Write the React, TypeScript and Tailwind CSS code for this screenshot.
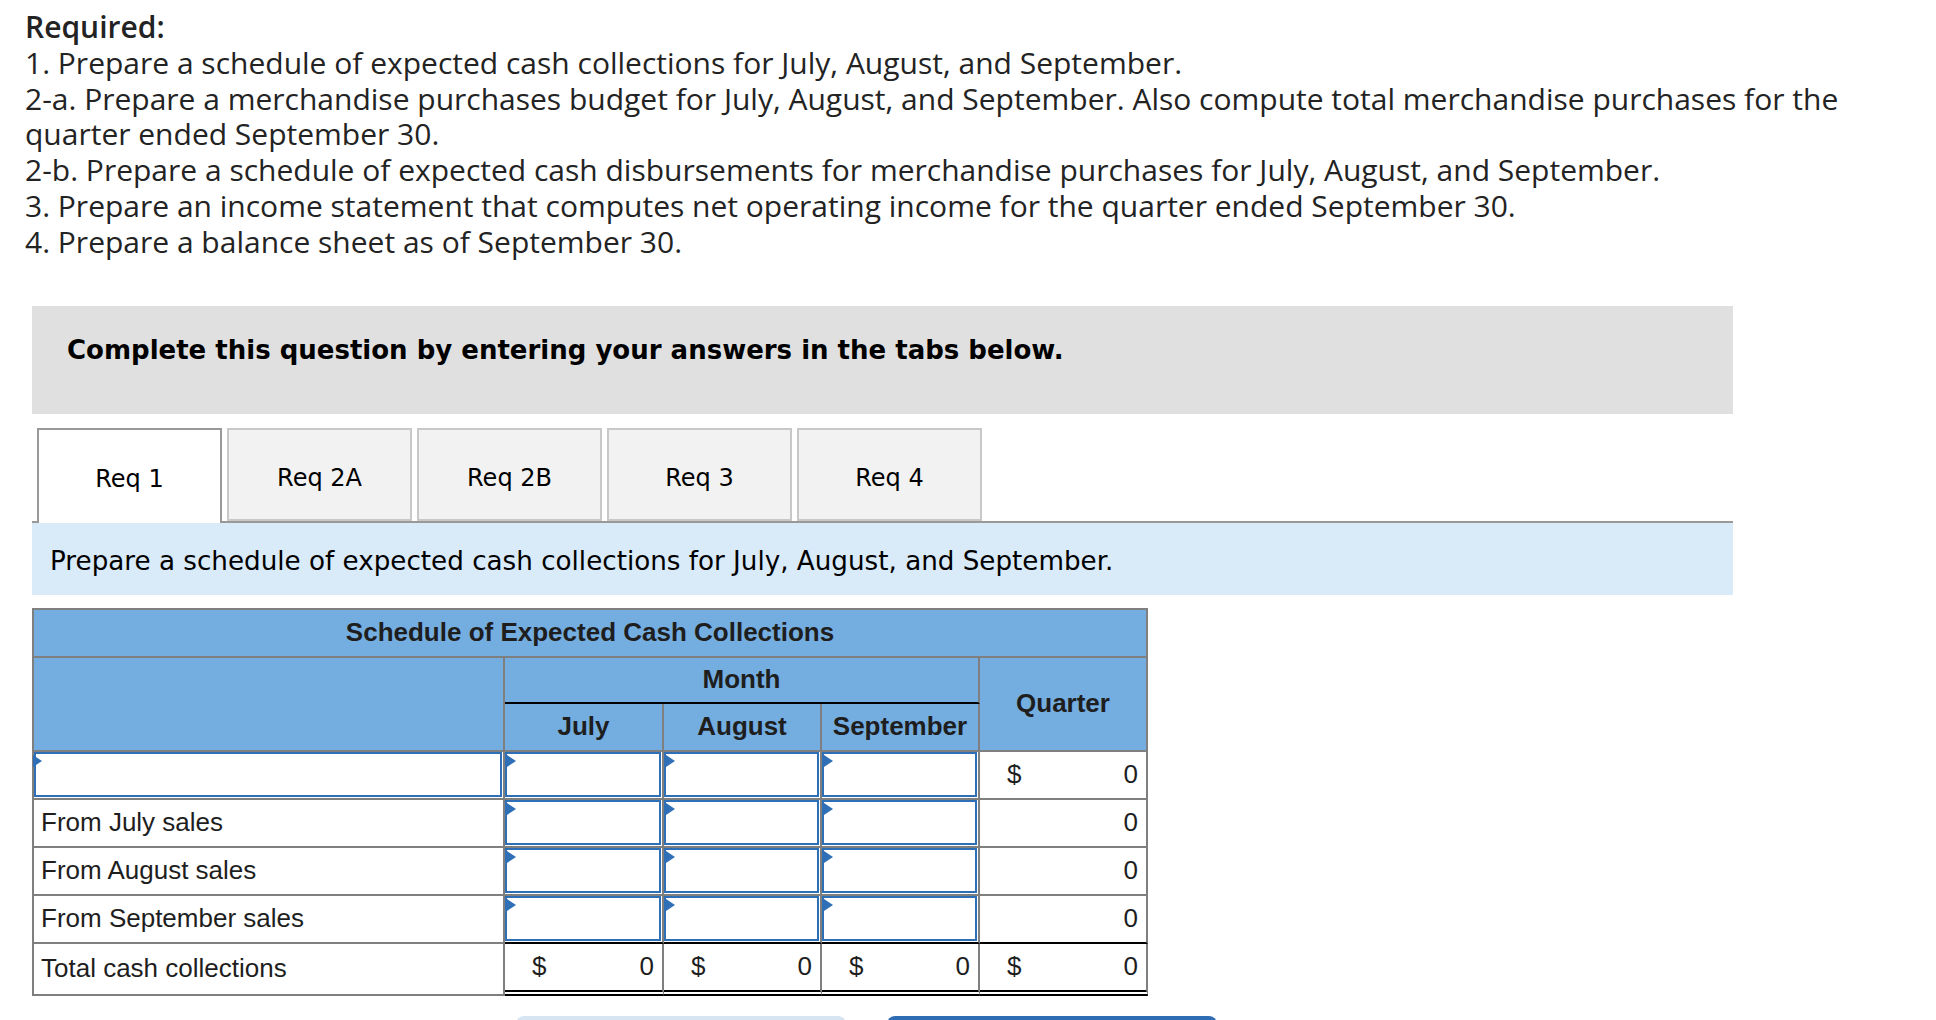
import React from "react";

const months = ["July", "August", "September"];
const rowLabels = ["", "From July sales", "From August sales", "From September sales"];
const tabs = ["Req 1", "Req 2A", "Req 2B", "Req 3", "Req 4"];

const InputCell: React.FC<{ last?: boolean; label?: boolean }> = ({ last, label }) => {
  return (
    <div
      className={`relative pr-px pb-px border-r-2 border-b-2 border-r-[#7f7f7f] ${
        last ? "border-b-black" : "border-b-[#7f7f7f]"
      }`}
    >
      <div className="h-full w-full border-2 border-[#2f6fb5] bg-white" />
      <span
        className={`absolute top-[3px] h-0 w-0 border-y-[6px] border-l-[9px] border-y-transparent border-l-[#2f6fb5] ${
          label ? "left-[-1px]" : "left-[2px]"
        }`}
      />
    </div>
  );
};

const MoneyCell: React.FC<{ dollar?: boolean; total?: boolean; last?: boolean }> = ({ dollar, total, last }) => {
  let border = "border-b-2 border-b-[#7f7f7f]";
  if (last) border = "border-b-2 border-b-black";
  if (total) border = "border-b-[6px] border-double border-b-black";
  return (
    <div className={`flex items-center justify-between pl-[27px] pr-[8px] border-r-2 border-r-[#7f7f7f] ${border}`}>
      <span>{dollar ? "$" : ""}</span>
      <span>0</span>
    </div>
  );
};

export default function App() {
  return (
    <div className="min-h-screen bg-white pt-[9px] text-[#222]">
      <div className="pl-[25px] pr-[25px] font-['Open_Sans',sans-serif] text-[30px] leading-[35.8px] text-[#232323]">
        <div className="font-semibold">Required:</div>
        <div>1. Prepare a schedule of expected cash collections for July, August, and September.</div>
        <div>
          2-a. Prepare a merchandise purchases budget for July, August, and September. Also compute total merchandise
          purchases for the quarter ended September 30.
        </div>
        <div>
          2-b. Prepare a schedule of expected cash disbursements for merchandise purchases for July, August, and
          September.
        </div>
        <div>3. Prepare an income statement that computes net operating income for the quarter ended September 30.</div>
        <div>4. Prepare a balance sheet as of September 30.</div>
      </div>

      <div className="ml-[32px] mt-[46px] w-[1701px]">
        <div className="h-[108px] bg-[#e0e0e0] pl-[35px] pt-[29px] font-['DejaVu_Sans',Verdana,sans-serif] text-[26px] font-bold leading-[30px] text-black">
          Complete this question by entering your answers in the tabs below.
        </div>

        <div className="mt-[14px] flex items-end gap-[5px] border-b-2 border-[#999] pl-[5px] font-['DejaVu_Sans',Verdana,sans-serif] text-[24px] text-black">
          {tabs.map((t, i) =>
            i === 0 ? (
              <div
                key={t}
                className="-mb-[2px] flex h-[95px] w-[185px] items-center justify-center border-2 border-b-0 border-[#999] bg-white pt-[5px]"
              >
                {t}
              </div>
            ) : (
              <div
                key={t}
                className="flex h-[93px] w-[185px] items-center justify-center border-2 border-[#c8c8c8] bg-[#f2f2f2] pt-[7px]"
              >
                {t}
              </div>
            )
          )}
        </div>

        <div className="flex h-[72px] items-center bg-[#d9eaf8] pl-[18px] pt-[6px] font-['DejaVu_Sans',Verdana,sans-serif] text-[26.2px] text-black">
          Prepare a schedule of expected cash collections for July, August, and September.
        </div>

        <div className="mt-[13px] w-[1116px] border-l-2 border-t-2 border-[#7f7f7f] font-['Liberation_Sans',Arial,sans-serif] text-[26px] text-[#1e1e1e]">
          <div className="grid grid-cols-[471px_159px_158px_158px_168px]">
            <div className="col-span-5 flex h-[48px] items-center justify-center border-b-2 border-r-2 border-[#7f7f7f] bg-[#74ade0] font-bold">
              Schedule of Expected Cash Collections
            </div>

            <div className="row-span-2 border-b-2 border-r-2 border-[#7f7f7f] bg-[#74ade0]" />
            <div className="col-span-3 flex h-[46px] items-center justify-center border-b-2 border-r-2 border-b-black border-r-[#7f7f7f] bg-[#74ade0] font-bold">
              Month
            </div>
            <div className="row-span-2 flex items-center justify-center border-b-2 border-r-2 border-[#7f7f7f] bg-[#74ade0] font-bold">
              Quarter
            </div>
            {months.map((m) => (
              <div
                key={m}
                className="flex h-[48px] items-center justify-center border-b-2 border-r-2 border-[#7f7f7f] bg-[#74ade0] font-bold"
              >
                {m}
              </div>
            ))}

            {rowLabels.map((label, r) => (
              <React.Fragment key={r}>
                {r === 0 ? (
                  <InputCell label />
                ) : (
                  <div className="flex h-[48px] items-center border-b-2 border-r-2 border-[#7f7f7f] pl-[7px]">
                    {label}
                  </div>
                )}
                {months.map((m) => (
                  <InputCell key={m} last={r === rowLabels.length - 1} />
                ))}
                <div className="grid h-[48px]">
                  <MoneyCell dollar={r === 0} last={r === rowLabels.length - 1} />
                </div>
              </React.Fragment>
            ))}

            <div className="flex h-[52px] items-center border-b-2 border-r-2 border-[#7f7f7f] pl-[7px]">
              Total cash collections
            </div>
            {[0, 1, 2, 3].map((c) => (
              <MoneyCell key={c} dollar total />
            ))}
          </div>
        </div>

        <div className="mt-[20px] flex gap-[41px] pl-[484px] pb-[40px]">
          <button aria-label="Previous: Req 1" className="h-[60px] w-[330px] rounded-[8px] bg-[#d7e4f2]" />
          <button aria-label="Next: Req 2A" className="h-[60px] w-[330px] rounded-[8px] bg-[#2e6db4]" />
        </div>
      </div>
    </div>
  );
}
